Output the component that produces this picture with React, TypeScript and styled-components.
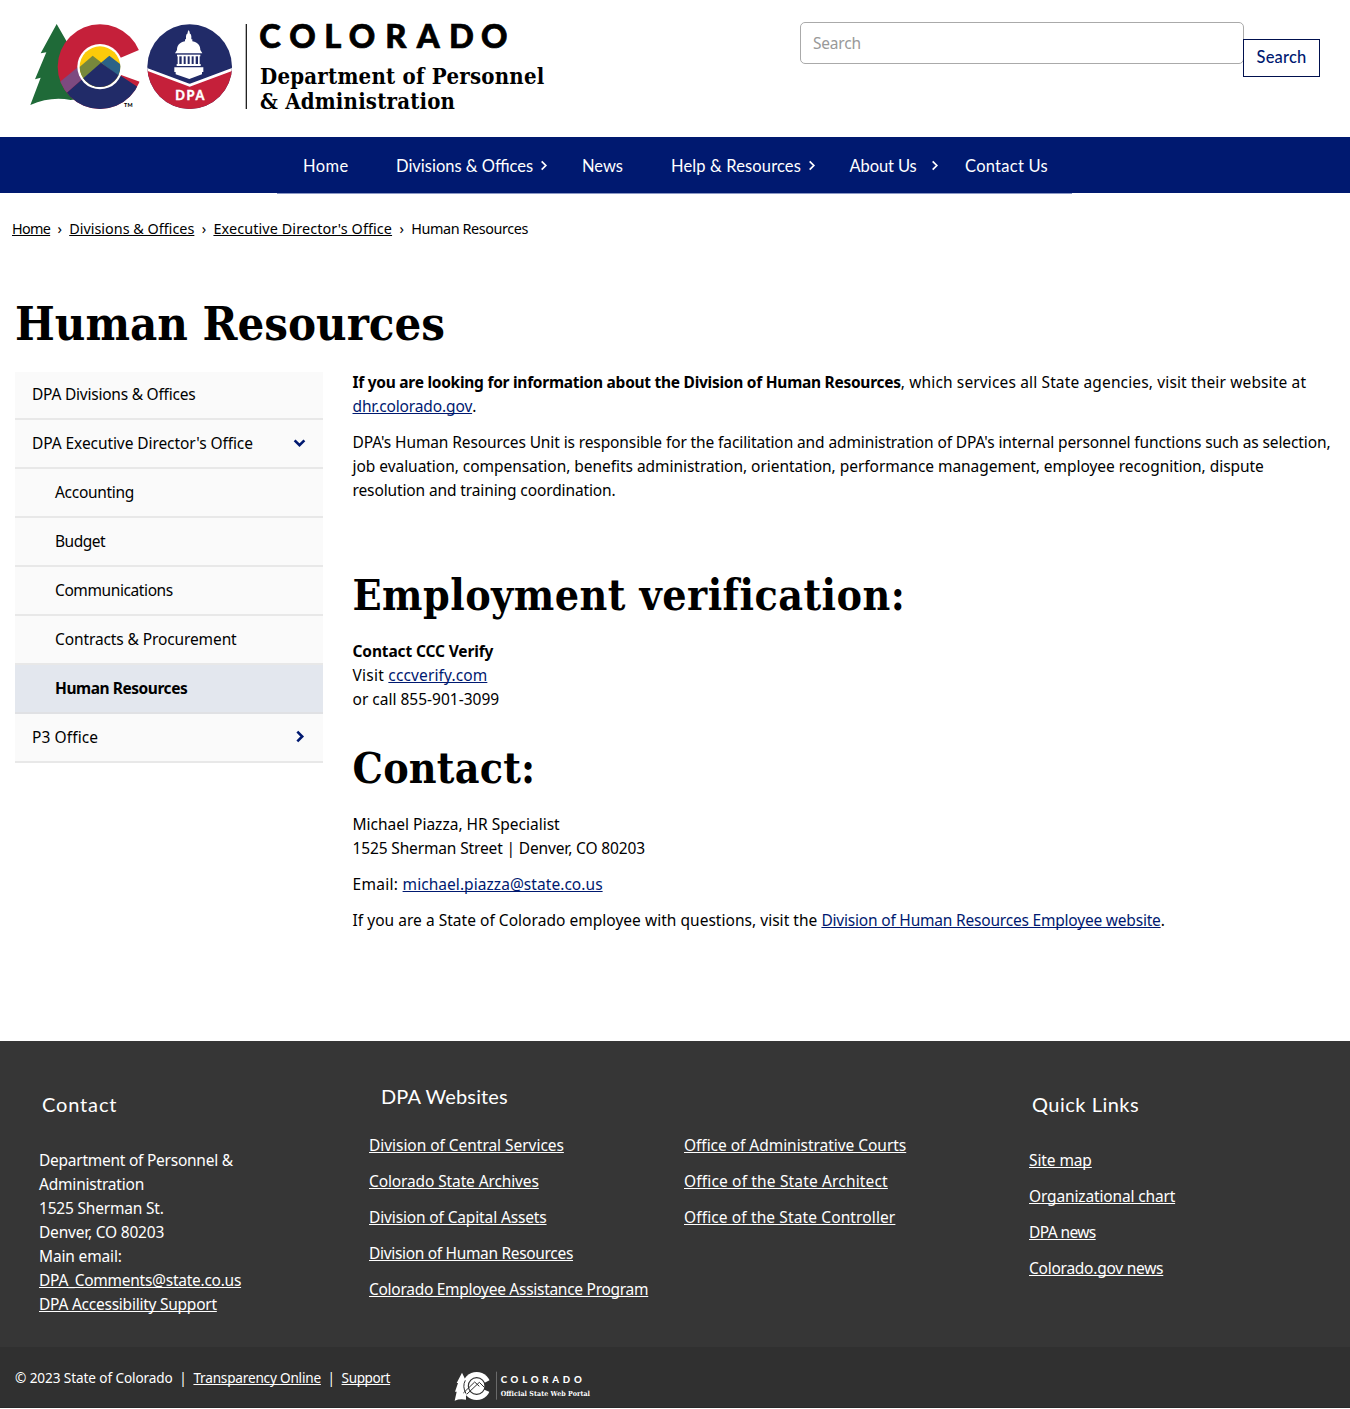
import React from "react";
import styled, { createGlobalStyle, css } from "styled-components";

const sans = `"Noto Sans", "Open Sans", sans-serif`;
const display = `Lato, "Open Sans", sans-serif`;
const slab = `"DejaVu Serif Condensed", "DejaVu Serif", serif`;
const navy = "#001970";

const GlobalStyle = createGlobalStyle`
  *, *::before, *::after { box-sizing: border-box; }
  body { margin: 0; background: #fff; color: #000; font: 15.5px/24px ${sans}; }
  h1, h2, h3, p, ul { margin: 0; padding: 0; }
  ul { list-style: none; }
`;

type Track = { $track?: number };
const tracked = css<Track>`letter-spacing: ${(p) => p.$track ?? 0}px;`;

const Page = styled.div`
  display: flex;
  flex-direction: column;
  height: 1409px;
  overflow: hidden;
`;

const Header = styled.header`
  display: flex;
  justify-content: space-between;
  align-items: flex-start;
  height: 137px;
  padding: 10px 30px 0 20px;
`;

const SearchForm = styled.form`
  display: flex;
  align-items: flex-start;
  padding-top: 12px;
`;

const SearchInput = styled.input`
  width: 444px;
  height: 42px;
  padding: 0 12px;
  border: 1px solid #aaa;
  border-radius: 5px;
  font: 15.5px ${sans};
  letter-spacing: -0.2px;
  &::placeholder { color: #999; opacity: 1; }
`;

const SearchButton = styled.button`
  width: 77px;
  height: 38px;
  margin: 17px 0 0 -1px;
  padding: 0 0 2px;
  border: 1px solid #00104e;
  background: #fff;
  color: ${navy};
  font: 500 16.5px ${display};
  letter-spacing: 0.2px;
`;

const Nav = styled.nav`
  display: flex;
  justify-content: center;
  height: 56px;
  background: ${navy};
`;

const NavList = styled.ul`
  display: flex;
  width: 795px;
  height: 57px;
  margin-left: -1px;
  padding: 1px 0 0 26px;
  border-bottom: 1px solid #8b98c4;
`;

const NavItem = styled.li<{ $width: number }>`
  display: flex;
  align-items: center;
  flex: none;
  width: ${(p) => p.$width}px;
  color: #fff;
`;

const NavLabel = styled.a<Track & { $gap?: number }>`
  margin-right: ${(p) => p.$gap ?? 0}px;
  font: 16.5px/24px ${display};
  white-space: nowrap;
  ${tracked}
`;

const Breadcrumb = styled.nav`
  display: flex;
  gap: 7.3px;
  padding: 24px 12px 0;
  font-size: 14.4px;
  white-space: nowrap;
`;

const Anchor = styled.a<Track & { $color?: string }>`
  color: ${(p) => p.$color ?? "inherit"};
  text-decoration: underline;
  text-decoration-thickness: 1px;
  text-decoration-skip-ink: none;
  text-underline-offset: 1px;
  ${tracked}
`;

const Text = styled.span<Track>`${tracked}`;
const Strong = styled.strong<Track>`${tracked}`;

const Title = styled.h1<Track>`
  margin-top: 53px;
  padding-left: 15px;
  font: 700 46.8px/60px ${slab};
  ${tracked}
`;

const Columns = styled.main`
  display: grid;
  grid-template-columns: 308px 1fr;
  column-gap: 29.5px;
  padding: 18px 0 0 15px;
  height: 687px;
`;

const SideMenu = styled.ul`
  display: flex;
  flex-direction: column;
`;

const SideItem = styled.li<{ $sub?: boolean; $active?: boolean; $first?: boolean }>`
  display: flex;
  align-items: center;
  justify-content: space-between;
  flex: none;
  height: ${(p) => (p.$first ? 48 : 49)}px;
  padding: 0 17px 2px ${(p) => (p.$sub ? 40 : 17)}px;
  border-bottom: 2px solid ${(p) => (p.$active ? "#e0e1e4" : "#e8e8e8")};
  background: ${(p) => (p.$active ? "#e3e7ee" : "#fafafa")};
  font-weight: ${(p) => (p.$active ? 700 : 400)};
`;

const Article = styled.article`
  margin-top: -2px;
`;

const Line = styled.div<Track>`
  height: 24px;
  white-space: nowrap;
  ${tracked}
`;

const Paragraph = styled.div`
  margin-bottom: 12px;
`;

const Heading = styled.h2<Track & { $top: number }>`
  margin: ${(p) => p.$top}px 0 17px;
  font: 700 42.5px/54px ${slab};
  ${tracked}
`;

const Footer = styled.footer`
  display: grid;
  grid-template-columns: 330px 315px 345px 1fr;
  height: 306px;
  padding: 43px 0 0 39px;
  background: #363636;
  color: #fff;
`;

const FooterColumn = styled.section<{ $top: number }>`
  display: flex;
  flex-direction: column;
  padding-top: ${(p) => p.$top}px;
`;

const FooterHeading = styled.h3<Track & { $indent: number; $gap: number }>`
  height: 24px;
  margin: 0 0 ${(p) => p.$gap}px ${(p) => p.$indent}px;
  font: 400 20px/24px ${display};
  ${tracked}
`;

const LinkList = styled.ul`
  display: flex;
  flex-direction: column;
  gap: 12px;
  white-space: nowrap;
`;

const LegalBar = styled.div`
  display: flex;
  align-items: flex-start;
  height: 61px;
  padding-left: 15px;
  border-bottom: 1px solid #292929;
  background: #303030;
  color: #fff;
  font-size: 13.6px;
`;

const Legal = styled.div`
  display: flex;
  gap: 6.6px;
  width: 425px;
  padding-top: 19px;
  white-space: nowrap;
`;

const PortalMark = styled.div`
  padding-top: 14px;
`;

const Block = styled.svg`
  display: block;
  flex: none;
`;

function Logo() {
  const xs = "718 808 913 986 1096 1190 1287 1383";
  return (
    <Block width="540" height="110" viewBox="0 0 1620 330" role="img" aria-label="Colorado Department of Personnel & Administration">
      <defs>
        <clipPath id="ring"><circle cx="240" cy="170" r="127" /></clipPath>
        <clipPath id="core"><circle cx="240" cy="170" r="61" /></clipPath>
        <clipPath id="seal"><circle cx="509" cy="170" r="127" /></clipPath>
      </defs>
      <path d="M110 42 L62 130 L79 127 L45 208 L62 203 L31 285 Q92 258 152 270 L172 268 L172 150 Z" fill="#1f6a38" />
      <g clipPath="url(#ring)">
        <rect x="100" y="30" width="280" height="280" fill="#c5203a" />
        <path d="M218 135 L105 228 L139 250 L243 158 Z" fill="#7d4a80" />
        <path d="M139 250 L243 158 L400 262 V320 H100 V275 Z" fill="#212b68" />
      </g>
      <path d="M295 146 L364 117 H380 V223 L295 192 Z" fill="#fff" />
      <circle cx="240" cy="170" r="68" fill="#fff" />
      <g clipPath="url(#core)">
        <rect x="170" y="100" width="140" height="140" fill="#fccb0a" />
        <path d="M218 137 L165 183 V240 H240 L245 158 Z" fill="#77883c" />
        <path d="M268 137 L243 158 L310 210 V170 Z" fill="#2b6287" />
        <path d="M243 158 L170 222 V240 H310 V206 Z" fill="#212b68" />
      </g>
      <text x="312" y="292" fontFamily="Lato" fontWeight="900" fontSize="16" textLength="26">TM</text>
      <g clipPath="url(#seal)">
        <rect x="380" y="40" width="260" height="260" fill="#212b68" />
        <path d="M380 178 L509 225 L640 178 V300 H380 Z" fill="#c5203a" />
        <path d="M375 176 L509 226 L643 176" fill="none" stroke="#fff" strokeWidth="8" />
      </g>
      <g fill="#fff">
        <path d="M503 66 L506 60 L509 66 V70 Q514 73 514 79 V88 H517 V94 C535 98 541 108 541 120 L547 130 H465 L471 120 C471 108 477 98 495 94 V88 H498 V79 Q498 73 503 70 Z" />
        <rect x="471" y="134" width="70" height="5" />
        <rect x="473" y="137" width="5" height="27" />
        <rect x="485" y="137" width="6" height="27" />
        <rect x="497" y="137" width="6" height="27" />
        <rect x="509" y="137" width="6" height="27" />
        <rect x="521" y="137" width="6" height="27" />
        <rect x="534" y="137" width="5" height="27" />
        <rect x="470" y="162" width="72" height="6" />
        <path d="M463 172 H550 V186 H546 V193 L508 207 L467 193 V186 H463 Z" />
      </g>
      <text x="466" y="270" fill="#fff" stroke="#fff" strokeWidth="1" fontFamily="Lato" fontWeight="900" fontSize="38" textLength="87">DPA</text>
      <rect x="677" y="42" width="4" height="255" fill="#222" />
      <text x={xs} y="114" fontFamily="Lato" fontWeight="900" fontSize="98" stroke="#000" strokeWidth="2">COLORADO</text>
      <text x="720" y="221" fontFamily="DejaVu Serif Condensed" fontWeight="700" fontSize="66" textLength="853">Department of Personnel</text>
      <text x="720" y="296" fontFamily="DejaVu Serif Condensed" fontWeight="700" fontSize="66" textLength="585">&amp; Administration</text>
    </Block>
  );
}

function PortalLogo() {
  return (
    <Block width="170" height="46" viewBox="0 0 510 138" role="img" aria-label="Colorado Official State Web Portal">
      <g fill="#fff">
        <path d="M66 35 L50 66 H54 L45 92 H50 L44 119 Q60 112 78 116 V60 Z" />
        <circle cx="110" cy="75" r="42" />
      </g>
      <path d="M128 68 L156 54 V96 L128 84 Z" fill="#303030" />
      <circle cx="110" cy="75" r="25" fill="#fff" stroke="#303030" strokeWidth="3.5" />
      <path d="M70 96 L104 63 L118 76 M80 100 L118 64 L132 78 M76 58 Q66 76 78 98" fill="none" stroke="#303030" strokeWidth="3" />
      <rect x="168" y="32" width="2" height="84" fill="#888" />
      <text x="182" y="67" fill="#fff" fontFamily="Lato" fontWeight="900" fontSize="29" letterSpacing="11.2">COLORADO</text>
      <text x="182" y="104" fill="#fff" fontFamily="DejaVu Serif Condensed" fontWeight="700" fontSize="21" textLength="268">Official State Web Portal</text>
    </Block>
  );
}

type ChevronProps = { size?: number; stroke?: number; color?: string; down?: boolean };
function Chevron({ size = 12, stroke = 2, color = "currentColor", down }: ChevronProps) {
  return (
    <Block width={size} height={size} viewBox="0 0 12 12">
      <path d={down ? "M1.5 4 L6 8.5 L10.5 4" : "M4 1.5 L8.5 6 L4 10.5"} fill="none" stroke={color} strokeWidth={stroke} />
    </Block>
  );
}

const navItems = [
  { label: "Home", width: 93, track: 0.4 },
  { label: "Divisions & Offices", width: 186, track: 0, gap: 5, arrow: true },
  { label: "News", width: 89, track: 0 },
  { label: "Help & Resources", width: 178.5, track: 0.13, gap: 5, arrow: true },
  { label: "About Us", width: 115.5, track: -0.1, gap: 12, arrow: true },
  { label: "Contact Us", width: 90, track: 0.27 },
];

const sideItems = [
  { label: "DPA Divisions & Offices", track: -0.23 },
  { label: "DPA Executive Director's Office", track: -0.08, arrow: "down" },
  { label: "Accounting", track: -0.3, sub: true },
  { label: "Budget", track: -0.5, sub: true },
  { label: "Communications", track: -0.4, sub: true },
  { label: "Contracts & Procurement", track: -0.11, sub: true },
  { label: "Human Resources", track: -0.45, sub: true, active: true },
  { label: "P3 Office", track: 0.1, arrow: "right" },
];

const divisions: [string, number][] = [
  ["Division of Central Services", -0.04],
  ["Colorado State Archives", -0.12],
  ["Division of Capital Assets", -0.14],
  ["Division of Human Resources", -0.32],
  ["Colorado Employee Assistance Program", -0.28],
];
const offices: [string, number][] = [
  ["Office of Administrative Courts", -0.04],
  ["Office of the State Architect", 0.16],
  ["Office of the State Controller", 0.12],
];
const quick: [string, number][] = [
  ["Site map", -0.1],
  ["Organizational chart", -0.15],
  ["DPA news", -0.6],
  ["Colorado.gov news", -0.25],
];

const Links = ({ items }: { items: [string, number][] }) => (
  <LinkList>
    {items.map(([label, track]) => (
      <li key={label}><Anchor $track={track}>{label}</Anchor></li>
    ))}
  </LinkList>
);

export default function App() {
  return (
    <Page>
      <GlobalStyle />
      <Header>
        <Logo />
        <SearchForm>
          <SearchInput placeholder="Search" />
          <SearchButton type="button">Search</SearchButton>
        </SearchForm>
      </Header>
      <Nav>
        <NavList>
          {navItems.map((n) => (
            <NavItem key={n.label} $width={n.width}>
              <NavLabel $track={n.track} $gap={n.gap}>{n.label}</NavLabel>
              {n.arrow && <Chevron size={11} stroke={1.9} />}
            </NavItem>
          ))}
        </NavList>
      </Nav>
      <Breadcrumb>
        <Anchor $track={-0.7}>Home</Anchor><span>›</span>
        <Anchor>Divisions &amp; Offices</Anchor><span>›</span>
        <Anchor $track={0.1}>Executive Director's Office</Anchor><span>›</span>
        <Text $track={-0.4}>Human Resources</Text>
      </Breadcrumb>
      <Title>Human Resources</Title>
      <Columns>
        <SideMenu>
          {sideItems.map((s, i) => (
            <SideItem key={s.label} $sub={s.sub} $active={s.active} $first={i === 0}>
              <Text $track={s.track}>{s.label}</Text>
              {s.arrow && <Chevron size={13} stroke={2.4} color={navy} down={s.arrow === "down"} />}
            </SideItem>
          ))}
        </SideMenu>
        <Article>
          <Paragraph>
            <Line>
              <Strong $track={-0.27}>If you are looking for information about the Division of Human Resources</Strong>
              <Text $track={0.14}>, which services all State agencies, visit their website at</Text>
            </Line>
            <Line><Anchor $color={navy} $track={-0.13}>dhr.colorado.gov</Anchor>.</Line>
          </Paragraph>
          <Paragraph>
            <Line $track={-0.11}>DPA's Human Resources Unit is responsible for the facilitation and administration of DPA's internal personnel functions such as selection,</Line>
            <Line $track={-0.04}>job evaluation, compensation, benefits administration, orientation, performance management, employee recognition, dispute</Line>
            <Line $track={-0.12}>resolution and training coordination.</Line>
          </Paragraph>
          <Heading $top={66} $track={0.45}>Employment verification:</Heading>
          <Line><Strong $track={-0.13}>Contact CCC Verify</Strong></Line>
          <Line $track={0.25}>Visit <Anchor $color={navy} $track={0.12}>cccverify.com</Anchor></Line>
          <Line>or call 855-901-3099</Line>
          <Heading $top={30} $track={0.2}>Contact:</Heading>
          <Paragraph>
            <Line>Michael Piazza, HR Specialist</Line>
            <Line $track={-0.14}>1525 Sherman Street | Denver, CO 80203</Line>
          </Paragraph>
          <Paragraph>
            <Line $track={0.3}>Email: <Anchor $color={navy} $track={0.05}>michael.piazza@state.co.us</Anchor></Line>
          </Paragraph>
          <Line>
            <Text $track={0.03}>If you are a State of Colorado employee with questions, visit the </Text>
            <Anchor $color={navy} $track={-0.2}>Division of Human Resources Employee website</Anchor>.
          </Line>
        </Article>
      </Columns>
      <Footer>
        <FooterColumn $top={8}>
          <FooterHeading $indent={3} $gap={32} $track={0.85}>Contact</FooterHeading>
          <Line $track={-0.25}>Department of Personnel &amp;</Line>
          <Line $track={-0.2}>Administration</Line>
          <Line $track={-0.2}>1525 Sherman St.</Line>
          <Line $track={-0.2}>Denver, CO 80203</Line>
          <Line $track={-0.15}>Main email:</Line>
          <Line><Anchor $track={-0.26}>DPA_Comments@state.co.us</Anchor></Line>
          <Line><Anchor $track={-0.24}>DPA Accessibility Support</Anchor></Line>
        </FooterColumn>
        <FooterColumn $top={0}>
          <FooterHeading $indent={12} $gap={25} $track={0.15}>DPA Websites</FooterHeading>
          <Links items={divisions} />
        </FooterColumn>
        <FooterColumn $top={49}>
          <Links items={offices} />
        </FooterColumn>
        <FooterColumn $top={8}>
          <FooterHeading $indent={3} $gap={32} $track={0.5}>Quick Links</FooterHeading>
          <Links items={quick} />
        </FooterColumn>
      </Footer>
      <LegalBar>
        <Legal>
          <Text $track={-0.1}>© 2023 State of Colorado</Text><span>|</span>
          <Anchor $track={-0.2}>Transparency Online</Anchor><span>|</span>
          <Anchor $track={-0.4}>Support</Anchor>
        </Legal>
        <PortalMark><PortalLogo /></PortalMark>
      </LegalBar>
    </Page>
  );
}
